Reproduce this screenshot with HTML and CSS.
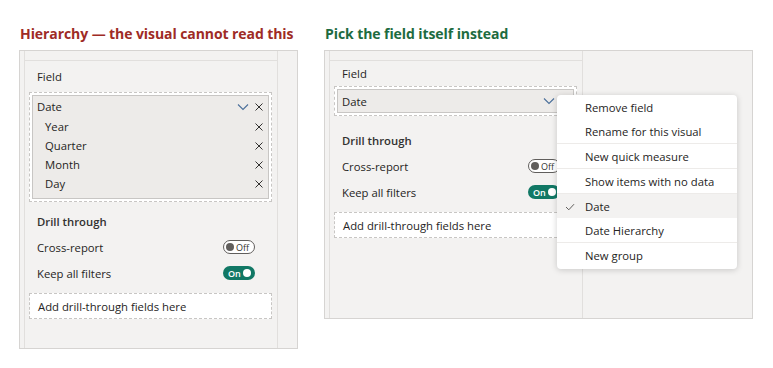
FILE: index.html
```html
<!DOCTYPE html>
<html>
<head>
<meta charset="utf-8">
<link rel="stylesheet" href="styles.css">
</head>
<body>
<div class="page">
  <section class="side side-left">
    <h2 class="title title-bad">Hierarchy — the visual cannot read this</h2>
    <div class="pane pane-left">
      <div class="col">
        <div class="strip"></div>
        <div class="body">
          <div class="label label-left">Field</div>
          <div class="well">
            <div class="box">
              <div class="row row-head"><span>Date</span>
                <span class="icons">
                  <svg class="chev" width="12" height="8" viewBox="0 0 12 8"><path d="M1 1.5 L6 6.5 L11 1.5" fill="none" stroke="#4a6f9a" stroke-width="1.1"/></svg>
                  <svg class="x" width="10" height="10" viewBox="0 0 10 10"><path d="M1.5 1.5 L8.5 8.5 M8.5 1.5 L1.5 8.5" stroke="#323130" stroke-width="1"/></svg>
                </span>
              </div>
              <div class="row row-sub"><span>Year</span><svg class="x" width="10" height="10" viewBox="0 0 10 10"><path d="M1.5 1.5 L8.5 8.5 M8.5 1.5 L1.5 8.5" stroke="#323130" stroke-width="1"/></svg></div>
              <div class="row row-sub"><span>Quarter</span><svg class="x" width="10" height="10" viewBox="0 0 10 10"><path d="M1.5 1.5 L8.5 8.5 M8.5 1.5 L1.5 8.5" stroke="#323130" stroke-width="1"/></svg></div>
              <div class="row row-sub"><span>Month</span><svg class="x" width="10" height="10" viewBox="0 0 10 10"><path d="M1.5 1.5 L8.5 8.5 M8.5 1.5 L1.5 8.5" stroke="#323130" stroke-width="1"/></svg></div>
              <div class="row row-sub"><span>Day</span><svg class="x" width="10" height="10" viewBox="0 0 10 10"><path d="M1.5 1.5 L8.5 8.5 M8.5 1.5 L1.5 8.5" stroke="#323130" stroke-width="1"/></svg></div>
            </div>
          </div>
          <div class="opt opt-head opt-head-left">Drill through</div>
          <div class="opt"><span>Cross-report</span><span class="tog tog-off"><i class="dot"></i><b>Off</b></span></div>
          <div class="opt"><span>Keep all filters</span><span class="tog tog-on"><b>On</b><i class="dot"></i></span></div>
          <div class="add add-left">Add drill-through fields here</div>
        </div>
      </div>
      <div class="rest"></div>
    </div>
  </section>

  <section class="side side-right">
    <h2 class="title title-good">Pick the field itself instead</h2>
    <div class="pane pane-right">
      <div class="col">
        <div class="strip"></div>
        <div class="body">
          <div class="label label-right">Field</div>
          <div class="well">
            <div class="box box-single">
              <div class="row row-head"><span>Date</span>
                <span class="icons">
                  <svg class="chev" width="12" height="8" viewBox="0 0 12 8"><path d="M1 1.5 L6 6.5 L11 1.5" fill="none" stroke="#4a6f9a" stroke-width="1.1"/></svg>
                </span>
              </div>
            </div>
          </div>
          <div class="opt opt-head opt-head-right">Drill through</div>
          <div class="opt"><span>Cross-report</span><span class="tog tog-off"><i class="dot"></i><b>Off</b></span></div>
          <div class="opt"><span>Keep all filters</span><span class="tog tog-on"><b>On</b><i class="dot"></i></span></div>
          <div class="add add-right">Add drill-through fields here</div>
        </div>
      </div>
      <div class="rest"></div>
      <ul class="menu">
        <li>Remove field</li>
        <li class="sep">Rename for this visual</li>
        <li class="sep">New quick measure</li>
        <li class="sep">Show items with no data</li>
        <li class="sel"><svg class="check" width="10" height="8" viewBox="0 0 10 8"><path d="M1 4 L3.8 6.8 L9 1.2" fill="none" stroke="#605e5c" stroke-width="1"/></svg>Date</li>
        <li class="sep">Date Hierarchy</li>
        <li>New group</li>
      </ul>
    </div>
  </section>
</div>
</body>
</html>
```

FILE: styles.css
```css
html, body {
  margin: 0;
  padding: 0;
  background: #ffffff;
}
body {
  font-family: "Open Sans", "Noto Sans", "Liberation Sans", sans-serif;
  font-size: 11.3px;
  color: #252423;
}
.page {
  display: flex;
  gap: 26px;
  padding: 24px 0 0 19px;
}
.side-left { width: 279px; }
.side-right { width: 429px; }
.title {
  margin: 0 0 6px 1px;
  font-size: 14px;
  line-height: 20px;
  font-weight: 700;
  letter-spacing: -0.08px;
  white-space: nowrap;
}
.title-bad { color: #9e2b25; }
.title-good { color: #1d6b40; }

.pane {
  position: relative;
  display: flex;
  background: #f3f2f1;
  border: 1px solid #d6d4d2;
  box-sizing: border-box;
}
.pane-left { height: 299px; }
.pane-right { height: 269px; }
.col {
  margin-left: 4px;
  width: 252px;
  border-left: 1px solid #e1dfdd;
  border-right: 1px solid #e1dfdd;
  display: flex;
  flex-direction: column;
}
.rest { flex: 1; }
.strip {
  height: 9px;
  border-bottom: 1px solid #e1dfdd;
}
.body {
  padding: 0 5px 0 4px;
}
.label {
  display: flex;
  align-items: center;
  padding-left: 8px;
}
.label-left { height: 31px; }
.label-right { height: 25px; }
.well {
  background: #ffffff;
  border: 1px dashed #c8c6c4;
  padding: 2px;
}
.box {
  background: #edebe9;
  border: 1px solid #c8c6c4;
  padding-bottom: 5px;
}
.box-single { padding-bottom: 0; }
.row {
  display: flex;
  align-items: center;
  justify-content: space-between;
  padding: 0 4px 0 4px;
}
.row-head { height: 21px; }
.box-single .row-head { height: 22px; }
.row-sub {
  height: 19px;
  padding-left: 12px;
}
.icons {
  display: flex;
  align-items: center;
  gap: 5px;
}
.box-single .icons { margin-right: 14px; }
.chev, .x, .check { display: block; }

.opt {
  height: 26px;
  display: flex;
  align-items: center;
  justify-content: space-between;
  padding: 0 17px 0 8px;
}
.opt-head {
  font-weight: 600;
  color: #323130;
}
.opt-head-left { margin-top: 6px; }
.opt-head-right { margin-top: 11px; }

.tog {
  width: 32px;
  height: 14px;
  box-sizing: border-box;
  border-radius: 7px;
  display: flex;
  align-items: center;
  gap: 2px;
  font-size: 9px;
  line-height: 1;
}
.tog b { font-weight: 400; }
.tog .dot {
  width: 8px;
  height: 8px;
  border-radius: 50%;
}
.tog-off {
  background: #ffffff;
  border: 1px solid #605e5c;
  padding: 0 2px;
  color: #323130;
}
.tog-off .dot { background: #605e5c; }
.tog-on {
  background: #117865;
  color: #ffffff;
  padding: 0 2px 0 5px;
}
.tog-on b { font-weight: 600; }
.tog-on .dot { background: #ffffff; }

.add {
  height: 26px;
  box-sizing: border-box;
  border: 1px dashed #c8c6c4;
  background: #ffffff;
  display: flex;
  align-items: center;
  padding-left: 8px;
}
.add-left { margin-top: 7px; }
.add-right { margin-top: 7px; }

.menu {
  position: absolute;
  left: 232px;
  top: 44px;
  width: 180px;
  margin: 0;
  padding: 0 0 2px 0;
  list-style: none;
  background: #ffffff;
  border-radius: 4px;
  box-shadow: 0 1px 6px rgba(0, 0, 0, 0.18);
}
.menu li {
  height: 24px;
  display: flex;
  align-items: center;
  padding-left: 28px;
  position: relative;
}
.menu li.sep { border-bottom: 1px solid #edebe9; }
.menu li.sel { background: #f3f2f1; }
.menu .check {
  position: absolute;
  left: 8px;
  top: 9px;
}
```
